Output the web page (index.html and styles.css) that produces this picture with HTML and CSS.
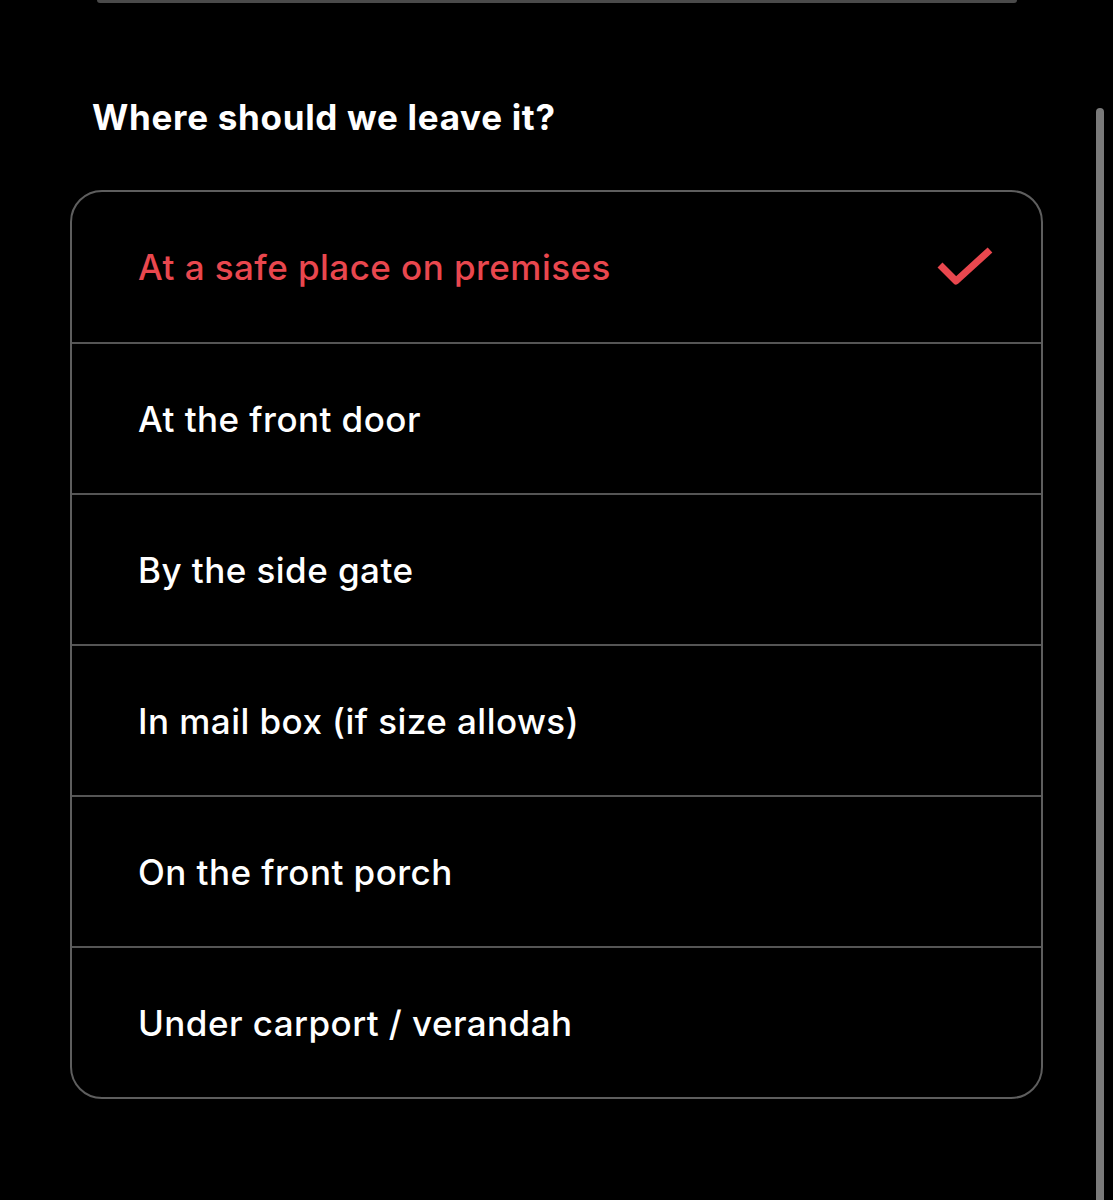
FILE: index.html
```html
<!DOCTYPE html>
<html>
<head>
<meta charset="utf-8">
<link rel="stylesheet" href="styles.css">
</head>
<body>
<div class="top-edge"></div>
<div class="scrollbar"></div>
<main class="content">
  <h2 class="title">Where should we leave it?</h2>
  <div class="options">
    <div class="option selected">
      <span class="label">At a safe place on premises</span>
      <svg class="check" width="60" height="48" viewBox="0 0 60 48"><path d="M5 22 L21 38 L55 7" fill="none" stroke="#e9474e" stroke-width="7" stroke-linecap="butt" stroke-linejoin="round"/></svg>
    </div>
    <div class="option"><span class="label">At the front door</span></div>
    <div class="option"><span class="label">By the side gate</span></div>
    <div class="option"><span class="label">In mail box (if size allows)</span></div>
    <div class="option"><span class="label">On the front porch</span></div>
    <div class="option"><span class="label">Under carport / verandah</span></div>
  </div>
</main>
</body>
</html>
```
FILE: styles.css
```css
html, body {
  margin: 0;
  padding: 0;
  background: #000;
  height: 1200px;
  overflow: hidden;
}
body {
  font-family: Inter, "Noto Sans", sans-serif;
  color: #fff;
  position: relative;
}
.top-edge {
  height: 3px;
  margin-left: 97px;
  width: 920px;
  background: #4a4a4a;
  border-radius: 0 0 6px 6px;
}
.scrollbar {
  position: absolute;
  left: 1096px;
  top: 108px;
  width: 8px;
  bottom: -20px;
  border-radius: 4px;
  background: #7a7a7a;
}
.content {
  padding: 0 70px 0 70px;
  width: 973px;
}
.title {
  margin: 91px 0 0 22px;
  font-size: 35px;
  line-height: 46px;
  font-weight: 700;
  letter-spacing: 0.7px;
}
.options {
  margin-top: 50px;
  border: 2px solid #5e5e5e;
  border-radius: 32px;
  display: flex;
  flex-direction: column;
}
.option {
  height: 149px;
  display: flex;
  align-items: center;
  justify-content: space-between;
  padding: 0 46px 0 66px;
  border-top: 2px solid #555;
}
.option:first-child {
  border-top: none;
  height: 150px;
}
.label {
  font-size: 35px;
  font-weight: 500;
  letter-spacing: 0.45px;
}
.selected .label {
  color: #e9474e;
}
.check {
  display: block;
}
```
